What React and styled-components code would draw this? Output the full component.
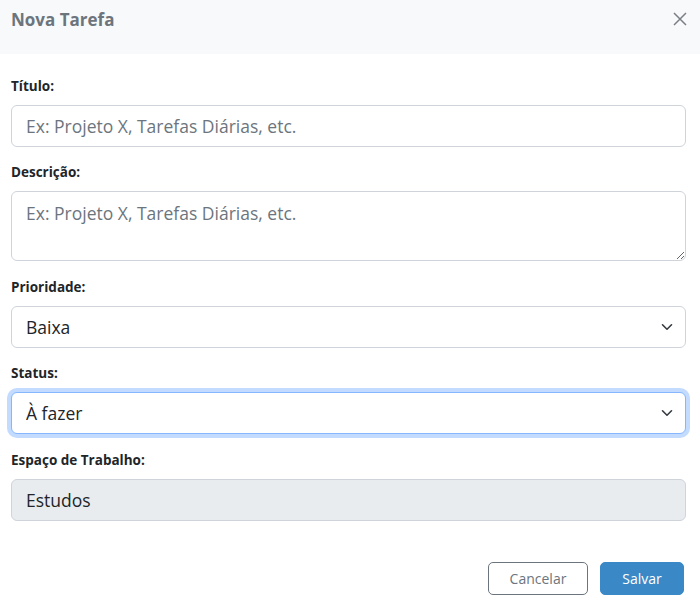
import React from 'react';
import styled, { createGlobalStyle, css } from 'styled-components';

const GlobalStyle = createGlobalStyle`
  * { box-sizing: border-box; }
  body {
    margin: 0;
    background: #fff;
    font-family: "Open Sans", "Noto Sans", sans-serif;
    color: #212529;
  }
`;

const Modal = styled.div`
  width: 700px;
  height: 610px;
  display: flex;
  flex-direction: column;
  background: #fff;
`;

const Header = styled.div`
  height: 54px;
  background: #f8f9fa;
  display: flex;
  align-items: center;
  justify-content: space-between;
  padding: 0 12px 0 11px;
`;

const Title = styled.h5`
  margin: 0 0 16px;
  font-size: 17px;
  font-weight: 700;
  color: #6c757d;
`;

const CloseButton = styled.button`
  border: 0;
  background: transparent;
  padding: 0;
  margin-bottom: 16px;
  width: 16px;
  height: 16px;
  display: flex;
  align-items: center;
  justify-content: center;
  color: #7a7f85;
  cursor: pointer;
`;

const Body = styled.div`
  padding: 22px 14px 0 11px;
  display: flex;
  flex-direction: column;
`;

const Field = styled.div`
  display: flex;
  flex-direction: column;
  margin-bottom: 15.4px;
`;

const Label = styled.label`
  font-size: 13.5px;
  font-weight: 700;
  line-height: 20px;
  margin-bottom: 9px;
  color: #212529;
`;

const controlBase = css`
  width: 100%;
  font-family: inherit;
  font-size: 17.5px;
  color: #212529;
  border: 1px solid #ced4da;
  border-radius: 6px;
  padding: 0 14px;
  outline: none;
  background-color: #fff;

  &::placeholder {
    color: #6c757d;
  }
`;

const Input = styled.input`
  ${controlBase}
  height: 42px;

  &:disabled {
    background-color: #e9ecef;
    color: #212529;
  }
`;

const TextArea = styled.textarea`
  ${controlBase}
  height: 70px;
  padding-top: 8px;
  line-height: 26px;
  resize: vertical;
`;

const SelectWrap = styled.div`
  position: relative;
  display: flex;
`;

const Select = styled.select`
  ${controlBase}
  height: 42px;
  appearance: none;
  -webkit-appearance: none;
  padding-right: 40px;
  ${(p) =>
    p.$focused &&
    css`
      border-color: #86b7fe;
      box-shadow: 0 0 0 4px rgba(13, 110, 253, 0.25);
    `}
`;

const Chevron = styled.svg`
  position: absolute;
  right: 13px;
  top: 50%;
  transform: translateY(-50%);
  pointer-events: none;
`;

const Footer = styled.div`
  display: flex;
  justify-content: flex-end;
  gap: 12px;
  padding: 26px 16px 0 0;
`;

const Button = styled.button`
  height: 33px;
  border-radius: 5px;
  font-family: inherit;
  font-size: 14px;
  cursor: pointer;
  padding: 0;
  width: ${(p) => p.$width}px;
  ${(p) =>
    p.$primary
      ? css`
          background: #3a89c6;
          border: 1px solid #3a89c6;
          color: #fff;
        `
      : css`
          background: #fff;
          border: 1px solid #6c757d;
          color: #6c757d;
        `}
`;

const ChevronIcon = () => (
  <Chevron width="12" height="8" viewBox="0 0 12 8">
    <path d="M1.5 1.8 6 6.2l4.5-4.4" fill="none" stroke="#343a40" strokeWidth="1.6" strokeLinecap="round" strokeLinejoin="round" />
  </Chevron>
);

const SelectField = ({ value, options, focused }) => (
  <SelectWrap>
    <Select defaultValue={value} $focused={focused}>
      {options.map((o) => (
        <option key={o}>{o}</option>
      ))}
    </Select>
    <ChevronIcon />
  </SelectWrap>
);

export default function App() {
  return (
    <>
      <GlobalStyle />
      <Modal>
        <Header>
          <Title>Nova Tarefa</Title>
          <CloseButton aria-label="Fechar">
            <svg width="14" height="14" viewBox="0 0 14 14">
              <path d="M1 1l12 12M13 1L1 13" stroke="currentColor" strokeWidth="1.5" />
            </svg>
          </CloseButton>
        </Header>
        <Body>
          <Field>
            <Label>Título:</Label>
            <Input placeholder="Ex: Projeto X, Tarefas Diárias, etc." />
          </Field>
          <Field>
            <Label>Descrição:</Label>
            <TextArea placeholder="Ex: Projeto X, Tarefas Diárias, etc." />
          </Field>
          <Field>
            <Label>Prioridade:</Label>
            <SelectField value="Baixa" options={['Baixa', 'Média', 'Alta']} />
          </Field>
          <Field>
            <Label>Status:</Label>
            <SelectField value="À fazer" options={['À fazer', 'Em andamento', 'Concluído']} focused />
          </Field>
          <Field>
            <Label>Espaço de Trabalho:</Label>
            <Input value="Estudos" disabled readOnly />
          </Field>
        </Body>
        <Footer>
          <Button $width={100}>Cancelar</Button>
          <Button $primary $width={84}>Salvar</Button>
        </Footer>
      </Modal>
    </>
  );
}
